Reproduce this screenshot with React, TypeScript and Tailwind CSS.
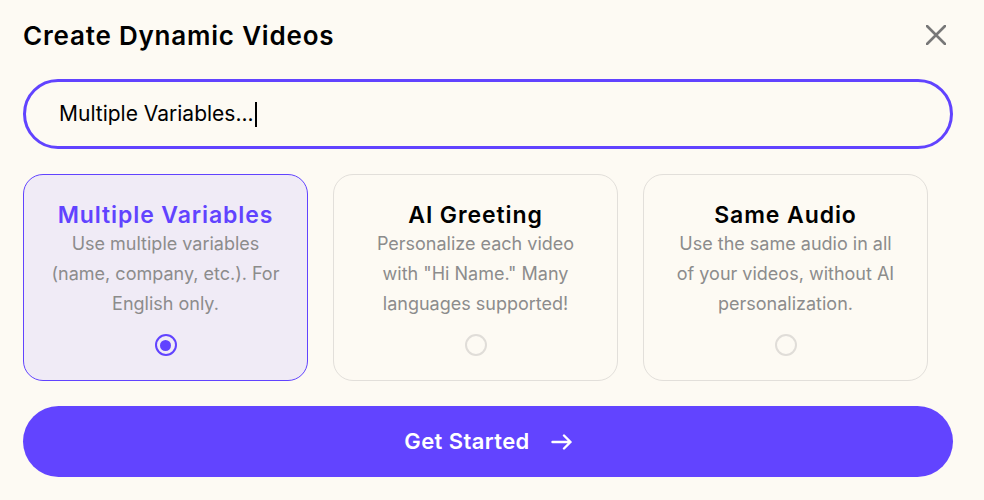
import React, { useState } from 'react';

const options = [
  {
    id: 'variables',
    title: 'Multiple Variables',
    lines: ['Use multiple variables', '(name, company, etc.). For', 'English only.'],
  },
  {
    id: 'greeting',
    title: 'AI Greeting',
    lines: ['Personalize each video', 'with "Hi Name." Many', 'languages supported!'],
  },
  {
    id: 'audio',
    title: 'Same Audio',
    lines: ['Use the same audio in all', 'of your videos, without AI', 'personalization.'],
  },
];

const App: React.FC = () => {
  const [selected, setSelected] = useState('variables');

  return (
    <div
      className="w-[984px] h-[500px] bg-[#FDFAF3] pl-[23px] pr-[31px] pt-[18px]"
      style={{ fontFamily: 'Inter, sans-serif' }}
    >
      {/* Header */}
      <div className="flex items-center justify-between h-[34px]">
        <h1 className="text-[26px] font-semibold text-black tracking-[0.8px]">Create Dynamic Videos</h1>
        <button className="mr-[7px] text-[#777]">
          <svg width="20" height="20" viewBox="0 0 20 20" fill="none" stroke="currentColor" strokeWidth="2.6" strokeLinecap="round">
            <path d="M1 1L19 19M19 1L1 19" />
          </svg>
        </button>
      </div>

      {/* Prompt input */}
      <div className="mt-[27px] h-[70px] rounded-full border-[3px] border-[#6143FF] flex items-center pl-[33px]">
        <span className="text-[21px] text-black">Multiple Variables...</span>
        <span className="w-[2px] h-[25px] bg-black ml-[1px]" />
      </div>

      {/* Option cards */}
      <div className="mt-[25px] flex gap-[25px]">
        {options.map((opt) => {
          const active = selected === opt.id;
          return (
            <button
              key={opt.id}
              onClick={() => setSelected(opt.id)}
              className={`w-[285px] h-[207px] rounded-[20px] border flex flex-col items-center pt-[26px] ${
                active ? 'bg-[#F0EBF6] border-[#6143FF]' : 'bg-transparent border-[#E2DFDA]'
              }`}
            >
              <div
                className={`text-[23px] font-semibold leading-[28px] tracking-[0.9px] ${
                  active ? 'text-[#6143FF]' : 'text-black'
                }`}
              >
                {opt.title}
              </div>
              <div className="text-[18px] leading-[30px] text-[#8C8C8C] text-center">
                {opt.lines.map((l) => (
                  <div key={l}>{l}</div>
                ))}
              </div>
              <div className="mt-[15px]">
                {active ? (
                  <div className="w-[22px] h-[22px] rounded-full border-[2px] border-[#6143FF] flex items-center justify-center">
                    <div className="w-[11px] h-[11px] rounded-full bg-[#6143FF]" />
                  </div>
                ) : (
                  <div className="w-[22px] h-[22px] rounded-full border-[2px] border-[#E0DDD8]" />
                )}
              </div>
            </button>
          );
        })}
      </div>

      {/* Submit */}
      <button className="mt-[25px] w-full h-[71px] rounded-full bg-[#6244FF] flex items-center justify-center gap-[21px] text-white">
        <span className="text-[22px] font-semibold tracking-[0.4px]">Get Started</span>
        <svg width="21" height="16" viewBox="0 0 21 16" fill="none" stroke="currentColor" strokeWidth="2.4" strokeLinecap="round" strokeLinejoin="round">
          <path d="M1.5 8H19.5M13 1.5L19.5 8L13 14.5" />
        </svg>
      </button>
    </div>
  );
};

export default App;
